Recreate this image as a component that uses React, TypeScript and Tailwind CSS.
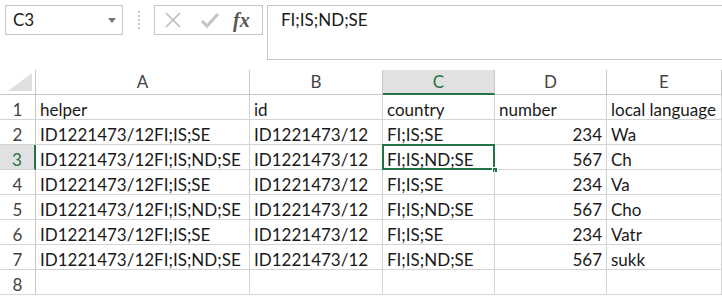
import { Fragment } from 'react';

const cols = ['A', 'B', 'C', 'D', 'E'];

const rows: { a: string; b: string; c: string; d: string; e: string }[] = [
  { a: 'helper', b: 'id', c: 'country', d: 'number', e: 'local language' },
  { a: 'ID1221473/12FI;IS;SE', b: 'ID1221473/12', c: 'FI;IS;SE', d: '234', e: 'Wa' },
  { a: 'ID1221473/12FI;IS;ND;SE', b: 'ID1221473/12', c: 'FI;IS;ND;SE', d: '567', e: 'Ch' },
  { a: 'ID1221473/12FI;IS;SE', b: 'ID1221473/12', c: 'FI;IS;SE', d: '234', e: 'Va' },
  { a: 'ID1221473/12FI;IS;ND;SE', b: 'ID1221473/12', c: 'FI;IS;ND;SE', d: '567', e: 'Cho' },
  { a: 'ID1221473/12FI;IS;SE', b: 'ID1221473/12', c: 'FI;IS;SE', d: '234', e: 'Vatr' },
  { a: 'ID1221473/12FI;IS;ND;SE', b: 'ID1221473/12', c: 'FI;IS;ND;SE', d: '567', e: 'sukk' },
  { a: '', b: '', c: '', d: '', e: '' },
];

const cell = 'h-[25px] border-r border-b border-[#d4d4d4] flex items-end leading-[18px] px-[4px] whitespace-nowrap overflow-hidden';

export default function App() {
  return (
    <div className="w-[722px] h-[299px] bg-white overflow-hidden text-[#1a1a1a]" style={{ fontFamily: 'Lato, "Liberation Sans", sans-serif' }}>
      {/* formula bar */}
      <div className="h-[70px] flex items-start pt-[5px] pl-[5px]">
        <div className="w-[118px] h-[30px] border border-[#c6c6c6] flex items-center justify-between pl-[7px] pr-[6px] text-[17px]">
          <span>C3</span>
          <svg width="8" height="5" viewBox="0 0 8 5"><path d="M0 0h8L4 5z" fill="#777" /></svg>
        </div>
        <div className="w-[31px] h-[30px] flex flex-col items-center justify-center gap-[2px]">
          {[0, 1, 2, 3, 4].map((i) => (
            <div key={i} className="w-[2px] h-[2px] bg-[#c8c8c8]" />
          ))}
        </div>
        <div className="w-[109px] h-[30px] border border-[#c6c6c6] flex items-center pl-[9px] pr-[6px]">
          <svg width="18" height="18" viewBox="0 0 18 18" className="mr-[18px]">
            <path d="M2 2L16 16M16 2L2 16" stroke="#bdbdbd" strokeWidth="1.6" />
          </svg>
          <svg width="20" height="18" viewBox="0 0 20 18" className="mr-[13px]">
            <path d="M2 10l5 5L18 3" stroke="#c4c4c4" strokeWidth="3" fill="none" />
          </svg>
          <span className="text-[#555] text-[20px] italic font-bold leading-none" style={{ fontFamily: '"Liberation Serif", serif' }}>fx</span>
        </div>
        <div className="ml-[4px] flex-1 h-[55px] border border-r-0 border-[#c6c6c6] pl-[13px] pt-[1px] text-[17px]">
          FI;IS;ND;SE
        </div>
      </div>

      {/* sheet */}
      <div className="grid grid-cols-[36px_214px_133px_112px_112px_1fr] text-[17px]">
        <div className="h-[25px] border-r border-b border-[#c6c6c6] flex items-end justify-end p-[3px]">
          <svg width="24" height="18" viewBox="0 0 24 18"><path d="M24 0V18H0z" fill="#dfdfdf" /></svg>
        </div>
        {cols.map((c) => (
          <div
            key={c}
            className={
              c === 'C'
                ? 'h-[25px] bg-[#e1e1e1] border-r border-[#c6c6c6] border-b-2 border-b-[#217346] flex items-center justify-center text-[#217346]'
                : 'h-[25px] border-r border-b border-[#c6c6c6] flex items-center justify-center text-[#444]'
            }
          >
            {c}
          </div>
        ))}
        {rows.map((r, i) => {
          const sel = i === 2;
          return (
            <Fragment key={i}>
              <div
                className={
                  sel
                    ? 'h-[25px] bg-[#e1e1e1] border-r-2 border-r-[#217346] border-b border-[#d4d4d4] flex items-end justify-center leading-[18px] text-[#217346]'
                    : 'h-[25px] border-r border-b border-[#c6c6c6] border-b-[#d4d4d4] flex items-end justify-center leading-[18px] text-[#444]'
                }
              >
                {i + 1}
              </div>
              <div className={cell}>{r.a}</div>
              <div className={cell}>{r.b}</div>
              <div className={cell + ' relative overflow-visible'}>
                {r.c}
                {sel && (
                  <>
                    <div className="absolute -left-[1px] -top-[1px] right-[-1px] bottom-[-1px] border-2 border-[#217346]" />
                    <div className="absolute right-[-4px] bottom-[-4px] w-[6px] h-[6px] bg-[#217346] border border-white" />
                  </>
                )}
              </div>
              <div className={i === 0 ? cell : cell + ' justify-end'}>{r.d}</div>
              <div className={cell}>{r.e}</div>
            </Fragment>
          );
        })}
      </div>
    </div>
  );
}
